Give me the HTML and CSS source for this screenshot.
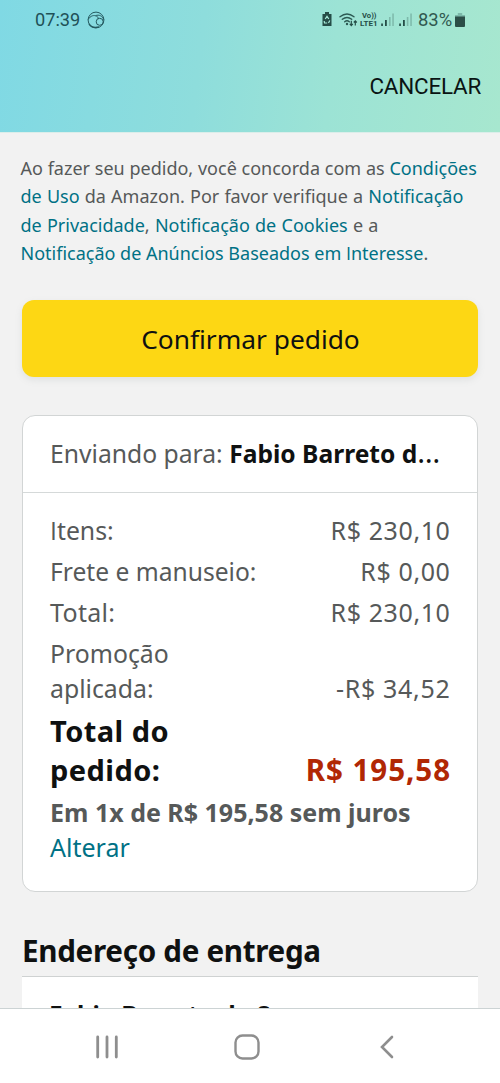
FILE: index.html
```html
<!DOCTYPE html>
<html lang="pt-BR">
<head>
<meta charset="utf-8">
<title>Confirmar pedido</title>
<link rel="stylesheet" href="styles.css">
</head>
<body>
<div class="screen">
  <header class="header">
    <div class="status">
      <span class="clock">07:39</span>
      <svg class="swirl" width="18" height="18" viewBox="0 0 18 18" fill="none" stroke="#255a60" stroke-width="1"><circle cx="9" cy="9" r="7.9"/><path d="M1.2 8.4C3.5 4.6 7 3.8 9.5 5.2Q12.3 6.8 11.2 8M8.5 4.7C12 3.2 15.5 5 16.8 8.6"/><circle cx="12.7" cy="10.8" r="3.5"/><path d="M2 12.8Q5 17.8 12 15.9" stroke-width="1.4"/></svg>
      <svg class="indicators" width="98" height="20" viewBox="0 0 98 20">
        <path d="M5 2h4v2h2.5v12h-9V4H5z" fill="#254d47"/>
        <path d="M5.2 9 7 6.3 8.8 9M9.8 10.5 8.5 13M7.2 13H4.5l-.3-2" fill="none" stroke="#a7ebd9" stroke-width="1.2"/>
        <g fill="none" stroke="#2c5a53" stroke-width="1.4" stroke-linecap="round"><path d="M20 6.7q7-5.5 14 0M22.3 9.3q4.7-3.7 9.4 0M24.7 11.7q2.3-1.8 4.6 0"/></g>
        <circle cx="27" cy="14" r="1.2" fill="#2c5a53"/>
        <path d="M31.3 10.8v4.5M29.8 13.8l1.5 1.7 1.5-1.7M35.3 15.5V11M33.8 12.5l1.5-1.7 1.5 1.7" fill="none" stroke="#254d47" stroke-width="1.2"/>
        <text x="42" y="8.2" textLength="14.5" lengthAdjust="spacingAndGlyphs" class="volte">Vo))</text>
        <text x="40" y="16.2" textLength="17.5" lengthAdjust="spacingAndGlyphs" class="volte">LTE1</text>
        <path d="M61.2 13.5h1.7V16h-1.7zM65 10h1.8v6H65zM79.2 13.5h1.7V16h-1.7zM83 10h1.8v6H83z" fill="#254d47"/>
        <path d="M69 7h1.6v9H69zM72.3 3.5h1.5V16h-1.5zM86.8 7h1.6v9h-1.6zM90.3 3.5h1.5V16h-1.5z" fill="#7db9aa"/>
      </svg>
      <span class="percent">83%</span>
      <svg class="battery" width="10" height="16" viewBox="0 0 10 16"><path d="M2.8 1h4.4v2H10v3H0V3h2.8z" fill="#7db9aa"/><path d="M0 4.5h10V14q0 1-1 1H1q-1 0-1-1z" fill="#2b4e47"/></svg>
    </div>
    <div class="toolbar"><span class="cancel">CANCELAR</span></div>
  </header>
  <main class="content">
    <p class="legal">
      <span class="line l1">Ao fazer seu pedido, você concorda com as <a>Condições</a></span>
      <span class="line l2"><a>de Uso</a> da Amazon. Por favor verifique a <a>Notificação</a></span>
      <span class="line l3"><a>de Privacidade</a>, <a>Notificação de Cookies</a> e a</span>
      <span class="line l4"><a>Notificação de Anúncios Baseados em <span class="cap">I</span>nteresse</a>.</span>
    </p>
    <button class="confirm"><span>Confirmar pedido</span></button>
    <section class="card">
      <div class="recipient"><span class="to">Enviando para: </span><b>Fabio Barreto d<span class="dots">…</span></b></div>
      <div class="summary">
        <div class="row"><span class="itens"><span class="cap">I</span>tens:</span><span class="amount">R$ 230,10</span></div>
        <div class="row"><span class="frete">Frete e manuseio:</span><span class="amount">R$ 0,00</span></div>
        <div class="row"><span class="subtotal">Total:</span><span class="amount">R$ 230,10</span></div>
        <div class="row promo"><span>Promoção<br>aplicada:</span><span class="amount">-R$ 34,52</span></div>
        <div class="row total"><span class="due">Total do<br>pedido:</span><span class="price">R$ 195,58</span></div>
        <div class="installments">Em 1x de R$ 195,58 sem juros</div>
        <a class="change">Alterar</a>
      </div>
    </section>
    <h2 class="heading">Endereço de entrega</h2>
    <section class="address"><b>Fabio Barreto da S</b></section>
  </main>
  <nav class="nav">
    <svg width="24" height="24" viewBox="0 0 24 24" stroke="#8e8e8e" stroke-width="2.8" stroke-linecap="round"><path d="M2.7 2v20M12 2v20M21.3 2v20"/></svg>
    <svg class="home" width="26" height="26" viewBox="0 0 26 26" fill="none" stroke="#8e8e8e" stroke-width="2.4"><rect x="1.5" y="1.5" width="23" height="23" rx="7"/></svg>
    <svg width="14" height="24" viewBox="0 0 14 24" fill="none" stroke="#8e8e8e" stroke-width="2.6" stroke-linecap="round"><path d="M12 2 2 12l10 10"/></svg>
  </nav>
</div>
</body>
</html>
```
FILE: styles.css
```css
* { box-sizing: border-box; }
body { margin: 0; background: #f2f2f2; font-family: "Noto Sans", sans-serif; color: #0f1111; }
.screen { width: 500px; height: 1083px; display: flex; flex-direction: column; overflow: hidden; }
.header { flex: none; height: 133px; background: linear-gradient(97deg, #80d9e4, #8edddc 40%, #9ce3d5 66%, #a7e7cf); border-bottom: 1px solid #dceeea; font-family: Roboto, sans-serif; }
.status { display: flex; align-items: center; height: 39px; padding: 0 35px 0 35px; color: #1f5157; }
.clock { font-size: 18.2px; width: 52px; }
.indicators { margin-left: auto; }
.percent { font-size: 18.4px; color: #315950; width: 37px; }
.volte { font: bold 7.8px Roboto, sans-serif; fill: #254d47; }
.toolbar { display: flex; justify-content: flex-end; padding: 34px 19px 0 0; }
.cancel { font-size: 22.4px; line-height: 27px; color: #0a1413; letter-spacing: -.2px; }
.content { flex: 1; min-height: 0; overflow: hidden; padding: 21px 22px 0; }
.legal { margin: 0 0 0 -1.5px; font-size: 18px; line-height: 28.3px; color: #565959; }
.line { display: block; width: max-content; white-space: nowrap; }
.l1 { word-spacing: .1px; }
.l2 { word-spacing: .5px; }
.l3 { word-spacing: .55px; }
.cap { font-family: "Open Sans", sans-serif; }
a { color: #007185; }
.confirm { display: block; width: 100%; height: 77px; margin: 32.8px 0 38.5px; padding: 1px 0 0 1px; border: 0; border-radius: 12px; background: #fdd714; box-shadow: 0 3px 7px rgba(130, 140, 140, .15); font: 26.3px "Noto Sans", sans-serif; color: #0f1111; }
.card { height: 477px; border: 1px solid #d2d5d5; border-radius: 13px; background: #fff; font-size: 25px; color: #565959; }
.recipient { height: 77px; padding: 0 27px; border-bottom: 1px solid #d5d9d9; line-height: 75px; white-space: nowrap; }
.recipient b { color: #0f1111; font-size: 24.6px; }
.to { font-size: 24.7px; }
.dots { font-weight: 400; font-size: 29px; line-height: 1; }
.summary { padding: 20px 27px 0; line-height: 35px; white-space: nowrap; }
.row { display: flex; justify-content: space-between; align-items: flex-end; margin-bottom: 6px; }
.frete { font-size: 24.6px; }
.itens { font-size: 24.8px; }
.subtotal { letter-spacing: .3px; }
.amount { letter-spacing: .6px; margin-right: -.5px; }
.promo { font-size: 24.8px; margin-bottom: 6px; }
.promo .amount { font-size: 25px; letter-spacing: .7px; }
.total { font-size: 29px; font-weight: 700; line-height: 38.5px; color: #0f1111; margin-bottom: 6px; }
.due { letter-spacing: .45px; }
.price { color: #b12704; font-size: 29.5px; letter-spacing: .95px; margin-right: -1px; }
.installments { font-weight: 700; }
.change { display: block; }
.heading { margin: 39px 0 5px; font-size: 29.6px; line-height: 40px; letter-spacing: -.3px; white-space: nowrap; }
.address { height: 120px; padding: 20px 27px; border-top: 1px solid #cfd2d2; background: #fff; font-size: 24.4px; line-height: 35px; }
.nav { flex: none; display: flex; justify-content: space-between; align-items: center; height: 75px; padding: 1px 106px 0 95px; border-top: 1px solid #ccd3d4; background: #fff; }
.home { margin-right: 6px; }
```
